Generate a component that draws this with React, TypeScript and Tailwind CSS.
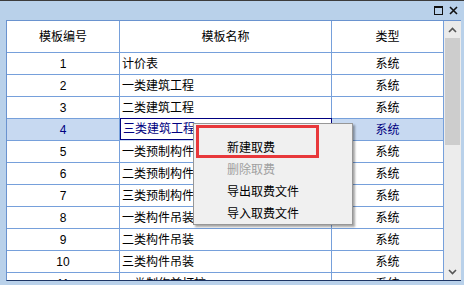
const rows: [string, string][] = [
  ["1", "计价表"],
  ["2", "一类建筑工程"],
  ["3", "二类建筑工程"],
  ["4", "三类建筑工程"],
  ["5", "一类预制构件"],
  ["6", "二类预制构件"],
  ["7", "三类预制构件"],
  ["8", "一类构件吊装"],
  ["9", "二类构件吊装"],
  ["10", "三类构件吊装"],
  ["11", "一类制作兼打桩"],
];

const font = { fontFamily: '"Liberation Sans", "Noto Sans CJK SC", sans-serif' };

export default function App() {
  return (
    <div
      className="relative w-[464px] h-[285px] overflow-hidden bg-[#b9d1ea] border-t border-[#3c3c3c] flex flex-col text-[12px] text-black"
      style={font}
    >
      {/* title bar */}
      <div className="h-[19px] flex items-center justify-end pr-[6px] gap-[6px]">
        <svg width="9" height="9" viewBox="0 0 9 9">
          <rect x="0.5" y="0.5" width="8" height="8" fill="none" stroke="#111" />
          <rect x="0" y="0" width="9" height="2" fill="#111" />
        </svg>
        <svg width="9" height="9" viewBox="0 0 9 9">
          <path d="M1 1 L8 8 M8 1 L1 8" stroke="#111" strokeWidth="1.6" />
        </svg>
      </div>

      {/* panel */}
      <div className="ml-[6px] mr-[3px] mb-[4px] flex-1 flex border-l border-t border-[#6a93cf] border-b border-b-[#1d3563] bg-white overflow-hidden">
        <div className="w-[437px] flex flex-col">
          <div className="grid grid-cols-[113px_212px_112px] h-[32px] shrink-0">
            <div className="flex items-center justify-center border-r border-b border-[#76a0db]">模板编号</div>
            <div className="flex items-center justify-center border-r border-b border-[#76a0db]">模板名称</div>
            <div className="flex items-center justify-center border-r border-b border-[#76a0db]">类型</div>
          </div>
          {rows.map(([no, name]) => {
            const sel = no === "4";
            return (
              <div
                key={no}
                className={`grid grid-cols-[113px_212px_112px] h-[22px] shrink-0 ${sel ? "bg-[#c7d9f1] text-[#000080]" : ""}`}
              >
                <div className="flex items-center justify-center border-r border-b border-[#76a0db]">{no}</div>
                <div
                  className={`flex items-center pl-[2px] border-b border-r ${sel ? "border-[#000080] border-l border-t -mt-px h-[22px] bg-white" : "border-[#76a0db]"}`}
                >
                  {name}
                </div>
                <div className="flex items-center justify-center border-r border-b border-[#76a0db]">系统</div>
              </div>
            );
          })}
        </div>
        {/* scrollbar */}
        <div className="w-[17px] flex flex-col bg-[#ececec]">
          <div className="h-[17px] flex items-center justify-center bg-[#eaeaea]">
            <svg width="9" height="6" viewBox="0 0 9 6">
              <path d="M1 5 L4.5 1.5 L8 5" fill="none" stroke="#555" strokeWidth="1.6" />
            </svg>
          </div>
          <div className="h-[107px] mx-[1px] bg-[#cdcdcd]" />
          <div className="flex-1" />
          <div className="h-[17px] flex items-center justify-center">
            <svg width="9" height="6" viewBox="0 0 9 6">
              <path d="M1 1 L4.5 4.5 L8 1" fill="none" stroke="#555" strokeWidth="1.6" />
            </svg>
          </div>
        </div>
      </div>

      {/* context menu */}
      <div className="absolute left-[193px] top-[122px] w-[160px] h-[102px] bg-[#f0f0f0] border border-[#979797] shadow-[2px_2px_2px_rgba(0,0,0,0.35)] pt-[13px]">
        <div className="h-[22px] flex items-center pl-[33px]">新建取费</div>
        <div className="h-[22px] flex items-center pl-[33px] text-[#a0a0a0]">删除取费</div>
        <div className="h-[22px] flex items-center pl-[33px]">导出取费文件</div>
        <div className="h-[22px] flex items-center pl-[33px]">导入取费文件</div>
      </div>
      {/* red annotation */}
      <div className="absolute left-[196px] top-[124px] w-[123px] h-[33px] border-[3px] border-[#e8383b]" />
    </div>
  );
}
